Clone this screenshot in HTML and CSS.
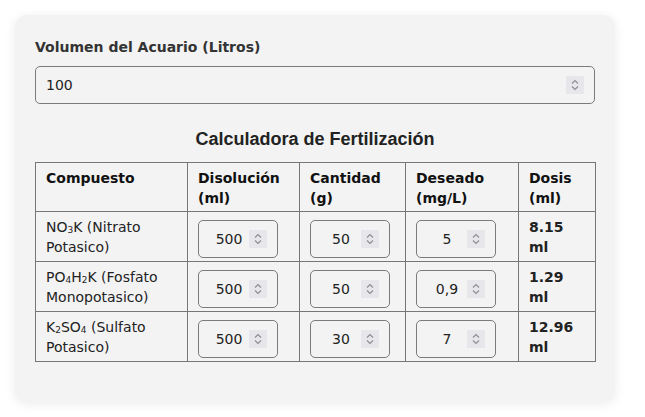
FILE: index.html
```html
<!DOCTYPE html>
<html lang="es">
<head>
    <meta charset="UTF-8">
    <meta name="viewport" content="width=device-width, initial-scale=1.0">
    <title>Calculadora de Fertilización</title>
    <link rel="stylesheet" href="styles.css">
</head>
<body>
    <div class="card">
        <label class="field-label" for="volumen">Volumen del Acuario (Litros)</label>
        <div class="num-box">
            <input type="text" id="volumen" value="100">
            <span class="spin"><svg width="18" height="18" viewBox="0 0 18 18"><path d="M6 7.5 9 4.5 12 7.5M6 10.5 9 13.5 12 10.5"/></svg></span>
        </div>

        <h2>Calculadora de Fertilización</h2>

        <table>
            <colgroup>
                <col class="c1"><col class="c2"><col class="c3"><col class="c4"><col class="c5">
            </colgroup>
            <thead>
                <tr>
                    <th>Compuesto</th>
                    <th>Disolución (ml)</th>
                    <th>Cantidad (g)</th>
                    <th>Deseado (mg/L)</th>
                    <th>Dosis (ml)</th>
                </tr>
            </thead>
            <tbody>
                <tr>
                    <td>NO<sub>3</sub>K (Nitrato Potasico)</td>
                    <td><div class="num-box small"><input type="text" value="500"><span class="spin"><svg width="18" height="18" viewBox="0 0 18 18"><path d="M6 7.5 9 4.5 12 7.5M6 10.5 9 13.5 12 10.5"/></svg></span></div></td>
                    <td><div class="num-box small"><input type="text" value="50"><span class="spin"><svg width="18" height="18" viewBox="0 0 18 18"><path d="M6 7.5 9 4.5 12 7.5M6 10.5 9 13.5 12 10.5"/></svg></span></div></td>
                    <td><div class="num-box small"><input type="text" value="5"><span class="spin"><svg width="18" height="18" viewBox="0 0 18 18"><path d="M6 7.5 9 4.5 12 7.5M6 10.5 9 13.5 12 10.5"/></svg></span></div></td>
                    <td class="dosis">8.15 ml</td>
                </tr>
                <tr>
                    <td>PO<sub>4</sub>H<sub>2</sub>K (Fosfato Monopotasico)</td>
                    <td><div class="num-box small"><input type="text" value="500"><span class="spin"><svg width="18" height="18" viewBox="0 0 18 18"><path d="M6 7.5 9 4.5 12 7.5M6 10.5 9 13.5 12 10.5"/></svg></span></div></td>
                    <td><div class="num-box small"><input type="text" value="50"><span class="spin"><svg width="18" height="18" viewBox="0 0 18 18"><path d="M6 7.5 9 4.5 12 7.5M6 10.5 9 13.5 12 10.5"/></svg></span></div></td>
                    <td><div class="num-box small"><input type="text" value="0,9"><span class="spin"><svg width="18" height="18" viewBox="0 0 18 18"><path d="M6 7.5 9 4.5 12 7.5M6 10.5 9 13.5 12 10.5"/></svg></span></div></td>
                    <td class="dosis">1.29 ml</td>
                </tr>
                <tr>
                    <td>K<sub>2</sub>SO<sub>4</sub> (Sulfato Potasico)</td>
                    <td><div class="num-box small"><input type="text" value="500"><span class="spin"><svg width="18" height="18" viewBox="0 0 18 18"><path d="M6 7.5 9 4.5 12 7.5M6 10.5 9 13.5 12 10.5"/></svg></span></div></td>
                    <td><div class="num-box small"><input type="text" value="30"><span class="spin"><svg width="18" height="18" viewBox="0 0 18 18"><path d="M6 7.5 9 4.5 12 7.5M6 10.5 9 13.5 12 10.5"/></svg></span></div></td>
                    <td><div class="num-box small"><input type="text" value="7"><span class="spin"><svg width="18" height="18" viewBox="0 0 18 18"><path d="M6 7.5 9 4.5 12 7.5M6 10.5 9 13.5 12 10.5"/></svg></span></div></td>
                    <td class="dosis">12.96 ml</td>
                </tr>
            </tbody>
        </table>
    </div>
</body>
</html>
```

FILE: styles.css
```css
body {
    font-family: "DejaVu Sans", Verdana, sans-serif;
    font-size: 14px;
    line-height: 20px;
    margin: 0;
    padding: 15px;
    background-color: #fff;
    color: #222;
}
.card {
    width: 600px;
    box-sizing: border-box;
    padding: 20px 20px 40px;
    background: #f3f3f3;
    border-radius: 12px;
    box-shadow: 0 2px 12px rgba(0, 0, 0, 0.08);
}
.field-label {
    display: block;
    margin: 2px 0 9px;
    font-weight: bold;
    color: #333;
}
.num-box {
    display: flex;
    align-items: center;
    height: 38px;
    box-sizing: border-box;
    padding: 0 10px;
    border: 1px solid #7b7b7b;
    border-radius: 5px;
}
.num-box input {
    flex: 1;
    min-width: 0;
    padding: 0;
    border: none;
    background: transparent;
    font-family: inherit;
    font-size: 14px;
    color: #222;
    outline: none;
}
.num-box.small {
    width: 80px;
    margin-top: 3px;
}
.num-box.small input {
    text-align: center;
}
.spin {
    display: block;
    width: 18px;
    height: 18px;
    background: #e6e6eb;
}
.spin svg {
    display: block;
    fill: none;
    stroke: #8e8e93;
    stroke-width: 1.2;
}
h2 {
    font-family: "Liberation Sans", Arial, sans-serif;
    font-size: 18px;
    line-height: 21px;
    text-align: center;
    color: #222;
    margin: 25px 0 12px;
}
table {
    width: 560px;
    table-layout: fixed;
    border-collapse: collapse;
}
.c1 { width: 152px; }
.c2 { width: 112px; }
.c3 { width: 106px; }
.c4 { width: 113px; }
.c5 { width: 77px; }
th, td {
    border: 1px solid #777;
    padding: 5px 10px 3px;
    text-align: left;
    vertical-align: top;
}
th {
    font-weight: bold;
    color: #111;
}
sub {
    font-size: 9px;
    line-height: 0;
    vertical-align: -1px;
}
.dosis {
    font-weight: bold;
}
```
